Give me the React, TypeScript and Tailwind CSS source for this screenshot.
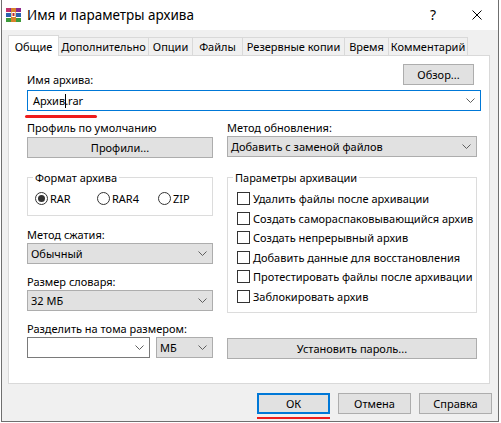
import React from "react";

function Chevron() {
  return (
    <svg width="9" height="5" viewBox="0 0 9 5" className="shrink-0">
      <path d="M0.5 0.5 L4.5 4.5 L8.5 0.5" fill="none" stroke="#5f5f5f" strokeWidth="1" />
    </svg>
  );
}

function Select({ text }: { text: string }) {
  return (
    <div className="h-[21px] flex items-center justify-between border border-[#adadad] bg-[#e1e1e1] pl-[3px] pr-[5px]">
      <span>{text}</span>
      <Chevron />
    </div>
  );
}

function Button({ text, className }: { text: string; className: string }) {
  return (
    <div className={"h-[21px] flex items-center justify-center border border-[#adadad] bg-[#e1e1e1] " + className}>
      {text}
    </div>
  );
}

function Checkbox({ text }: { text: string }) {
  return (
    <div className="h-[19.5px] flex items-center">
      <div className="w-[13px] h-[13px] border border-[#333333] bg-white shrink-0" />
      <span className="ml-[3px] whitespace-nowrap">{text}</span>
    </div>
  );
}

function Radio({ text, checked, className }: { text: string; checked?: boolean; className: string }) {
  return (
    <div className={"flex items-center h-[15px] " + className}>
      <div className="w-[13px] h-[13px] rounded-full border border-[#333333] bg-white flex items-center justify-center shrink-0">
        {checked && <div className="w-[7px] h-[7px] rounded-full bg-[#333333]" />}
      </div>
      <span className="ml-[2px]">{text}</span>
    </div>
  );
}

function WinRarIcon() {
  return (
    <svg width="15" height="14" viewBox="0 0 15 14" className="shrink-0">
      <rect x="0" y="0" width="15" height="4" fill="#8e2a8c" />
      <rect x="0" y="0" width="4" height="4" fill="#c2336b" />
      <rect x="0" y="5" width="15" height="4" fill="#2d62b0" />
      <rect x="0" y="10" width="15" height="4" fill="#3e9b3b" />
      <rect x="0" y="4" width="15" height="1" fill="#ffffff" />
      <rect x="0" y="9" width="15" height="1" fill="#ffffff" />
      <rect x="5" y="0" width="5" height="14" fill="#d9822b" />
      <rect x="5.5" y="4" width="4" height="5" fill="#ffffff" />
      <rect x="6.5" y="5" width="2" height="3" fill="#c0272d" />
    </svg>
  );
}

const tabs: { label: string; w: string }[] = [
  { label: "Дополнительно", w: "w-[90px]" },
  { label: "Опции", w: "w-[44px]" },
  { label: "Файлы", w: "w-[50px]" },
  { label: "Резервные копии", w: "w-[102px]" },
  { label: "Время", w: "w-[44px]" },
  { label: "Комментарий", w: "w-[79px]" },
];

export default function App() {
  return (
    <div className="w-[501px] h-[423px] bg-white overflow-hidden font-['Noto_Sans','Open_Sans',sans-serif] text-[11px] leading-[15px] text-black">
      <div className="ml-[1px] w-[498px] h-[422px] border-x border-b border-[#6f6f6f] flex flex-col bg-[#f0f0f0]">
        {/* Title bar */}
        <div className="h-[30px] bg-white flex items-center shrink-0">
          <div className="ml-[4px]">
            <WinRarIcon />
          </div>
          <span className="ml-[6px] text-[13.5px] leading-[18px]">Имя и параметры архива</span>
          <span className="ml-auto w-[20px] text-center text-[14px] leading-[18px]">?</span>
          <svg width="10" height="10" viewBox="0 0 10 10" className="ml-[29px] mr-[16px]">
            <path d="M0.5 0.5 L9.5 9.5 M9.5 0.5 L0.5 9.5" stroke="#000" strokeWidth="1" />
          </svg>
        </div>

        {/* Tabs */}
        <div className="mt-[5px] ml-[6px] flex items-end h-[20px]">
          <div className="relative z-10 -mb-px w-[51px] h-[21px] bg-white border border-b-0 border-[#d9d9d9] flex items-center justify-center">
            Общие
          </div>
          {tabs.map((t) => (
            <div
              key={t.label}
              className={"h-[18px] border-t border-r border-[#d9d9d9] bg-[#f0f0f0] flex items-center justify-center whitespace-nowrap " + t.w}
            >
              {t.label}
            </div>
          ))}
        </div>

        {/* Panel */}
        <div className="ml-[6px] w-[482px] h-[329px] border border-[#d9d9d9] bg-white flex flex-col pt-[8px] pl-[18px] pr-[8px]">
          <div className="flex items-start h-[26px]">
            <span className="mt-[8px]">Имя архива:</span>
            <Button text="Обзор..." className="ml-auto mr-[7px] w-[71px]" />
          </div>
          <div className="h-[21px] border border-[#0078d7] bg-white flex items-center justify-between pl-[5px] pr-[5px]">
            <span className="flex items-center">
              Архив
              <span className="inline-block w-px h-[14px] bg-black -mr-px" />
              .rar
            </span>
            <Chevron />
          </div>
          <div className="mt-[4px] -ml-[2px] w-[72px] h-[3px] bg-[#ee1c1c] rounded-full" />

          <div className="mt-[2px] flex">
            {/* Left column */}
            <div className="w-[186px] flex flex-col">
              <span>Профиль по умолчанию</span>
              <Button text="Профили..." className="mt-[2px]" />
              <fieldset className="mt-[12px] border border-[#dcdcdc] pl-[5px] pt-[6px] pb-[9px]">
                <legend className="px-[2px]">Формат архива</legend>
                <div className="flex ml-[2px]">
                  <Radio text="RAR" checked className="w-[62px]" />
                  <Radio text="RAR4" className="w-[61px]" />
                  <Radio text="ZIP" className="" />
                </div>
              </fieldset>
              <span className="mt-[11px]">Метод сжатия:</span>
              <div className="mt-[1px]">
                <Select text="Обычный" />
              </div>
              <span className="mt-[10px]">Размер словаря:</span>
              <div className="mt-[1px]">
                <Select text="32 МБ" />
              </div>
              <span className="mt-[10px]">Разделить на тома размером:</span>
              <div className="mt-[1px] flex">
                <div className="w-[123px] h-[21px] border border-[#7a7a7a] bg-white flex items-center justify-end pr-[5px]">
                  <Chevron />
                </div>
                <div className="ml-[6px] w-[57px]">
                  <Select text="МБ" />
                </div>
              </div>
            </div>

            {/* Right column */}
            <div className="ml-[14px] w-[250px] flex flex-col">
              <span>Метод обновления:</span>
              <div className="mt-[1px]">
                <Select text="Добавить с заменой файлов" />
              </div>
              <fieldset className="mt-[13px] border border-[#dcdcdc] pl-[5px] pt-[4px] pb-[6px]">
                <legend className="px-[2px]">Параметры архивации</legend>
                <div className="ml-[4px] flex flex-col">
                  <Checkbox text="Удалить файлы после архивации" />
                  <Checkbox text="Создать самораспаковывающийся архив" />
                  <Checkbox text="Создать непрерывный архив" />
                  <Checkbox text="Добавить данные для восстановления" />
                  <Checkbox text="Протестировать файлы после архивации" />
                  <Checkbox text="Заблокировать архив" />
                </div>
              </fieldset>
              <Button text="Установить пароль..." className="mt-[25px]" />
            </div>
          </div>
        </div>

        {/* Bottom buttons */}
        <div className="mt-[9px] flex justify-end items-start pr-[6px] gap-[8px]">
          <div className="flex flex-col">
            <div className="w-[73px] h-[21px] border-2 border-[#0078d7] bg-[#e1e1e1] flex items-center justify-center">
              ОК
            </div>
            <div className="mt-[3px] h-[2px] w-[73px] bg-[#ee1c1c]" />
          </div>
          <Button text="Отмена" className="w-[73px]" />
          <Button text="Справка" className="w-[73px]" />
        </div>
      </div>
    </div>
  );
}
